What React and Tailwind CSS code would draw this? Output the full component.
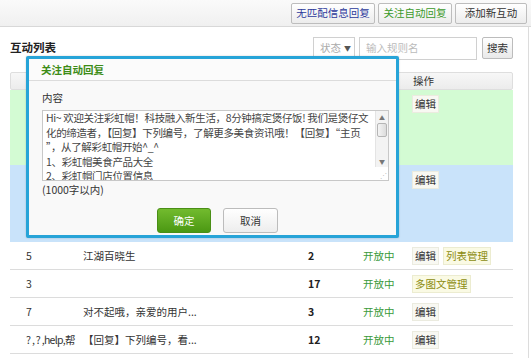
import React from "react";

const rows = [
  { id: "5", name: "江湖百晓生", count: "2", actions: ["edit", "list"] },
  { id: "3", name: "", count: "17", actions: ["multi"] },
  { id: "7", name: "对不起哦，亲爱的用户...", count: "3", actions: ["edit"] },
  { id: "? , ? ,help,帮", name: "【回复】下列编号，看...", count: "12", actions: ["edit"] },
];

const EditBtn = () => (
  <span className="inline-flex items-center h-[18px] px-[2px] bg-[#f8f8f2] border border-[#ebebdf] text-[#333]">编辑</span>
);

const OliveBtn = ({ label }) => (
  <span className="inline-flex items-center h-[18px] px-[2px] bg-[#fafae4] border border-[#ececd0] text-[#8c8c10]">{label}</span>
);

const TopBtn = ({ label, color, w }) => (
  <button className={`h-[21px] ${w} flex items-center justify-center border border-[#bdbdbd] rounded-[2px] bg-gradient-to-b from-white to-[#ececec] ${color}`}>
    {label}
  </button>
);

const content = [
  "Hi~ 欢迎关注彩虹帽！科技融入新生活，8分钟搞定煲仔饭! 我们是煲仔文",
  "化的缔造者，【回复】下列编号，了解更多美食资讯哦！【回复】“主页",
  "”，从了解彩虹帽开始^_^",
  "1、彩虹帽美食产品大全",
  "2、彩虹帽门店位置信息",
];

const Dialog = () => (
  <div className="absolute left-[26px] top-[56px] w-[373px] h-[182px] border-[3px] border-[#27a4d8] rounded-[2px] bg-[#f9f9f9] flex flex-col shadow-[0_0_2px_rgba(0,0,0,0.2)]">
    <div className="h-[22px] shrink-0 flex items-center pl-[12px] border-b border-[#dcdcdc] bg-[#fbfbfb] text-[#3c8c16] font-semibold">
      关注自动回复
    </div>
    <div className="flex flex-col pl-[13px] pr-[7px] pt-[9px]">
      <div className="leading-[15px] text-[#333]">内容</div>
      <div className="mt-[5px] h-[71px] flex border border-[#c8c8c8] bg-white overflow-hidden">
        <div className="flex-1 min-w-0 pl-[3px] leading-[14.5px] tracking-[-0.35px] text-[#444] overflow-hidden">
          {content.map((l, i) => (
            <div key={i} className="whitespace-nowrap">{l}</div>
          ))}
        </div>
        <div className="w-[13px] shrink-0 flex flex-col">
          <div className="flex-1 flex flex-col bg-[#f3f3f3] border-l border-[#e4e4e4]">
            <div className="h-[12px] flex items-center justify-center text-[6px] text-[#777]">▲</div>
            <div className="mx-[1px] h-[14px] border border-[#b5b5b5] rounded-[2px] bg-gradient-to-r from-[#f4f4f4] to-[#dcdcdc]" />
            <div className="flex-1" />
            <div className="h-[12px] flex items-center justify-center text-[6px] text-[#777]">▼</div>
          </div>
          <div className="h-[13px] bg-white flex items-end justify-end pr-[1px] pb-[1px] text-[7px] leading-[7px] text-[#bbb]">⋰</div>
        </div>
      </div>
      <div className="leading-[15px] text-[#333] mt-[1px]">(1000字以内)</div>
      <div className="flex gap-[12px] mt-[11px] ml-[115px]">
        <button className="w-[54px] h-[25px] rounded-[3px] border border-[#4a8f16] bg-gradient-to-b from-[#72bb2e] to-[#4b9812] text-white">确定</button>
        <button className="w-[55px] h-[25px] rounded-[3px] border border-[#bcbcbc] bg-gradient-to-b from-white to-[#ededed] text-[#333]">取消</button>
      </div>
    </div>
  </div>
);

export default function App() {
  return (
    <div className="relative w-[531px] h-[358px] overflow-hidden bg-white text-[10.5px] text-[#333] font-['Noto_Sans_CJK_SC','Liberation_Sans',sans-serif]">
      <div className="h-[27px] flex items-center justify-end gap-[3px] pr-[4px] border-b border-[#d8d8d8] bg-gradient-to-b from-[#fafafa] to-[#f0f0f0]">
        <TopBtn label="无匹配信息回复" color="text-[#2d3a9c]" w="w-[84px]" />
        <TopBtn label="关注自动回复" color="text-[#3b9a2a]" w="w-[74px]" />
        <TopBtn label="添加新互动" color="text-[#333]" w="w-[72px]" />
      </div>
      <div className="absolute right-[2px] top-[27px] bottom-0 w-px bg-[#dcdcdc]" />

      <div className="flex items-center h-[40px] pl-[10px] pr-[18px] pt-[2px]">
        <div className="text-[11.5px] font-semibold text-[#222]">互动列表</div>
        <div className="flex-1" />
        <div className="w-[42px] h-[23px] border border-[#d0d0d0] flex items-center pl-[6px] text-[#aaa]">状态 <span className="ml-[3px] text-[7px] text-[#555]">▼</span></div>
        <div className="ml-[4px] w-[118px] h-[23px] border border-[#d0d0d0] flex items-center pl-[6px] text-[#bbb]">输入规则名</div>
        <button className="ml-[5px] w-[31px] h-[22px] border border-[#bcbcbc] rounded-[2px] bg-gradient-to-b from-white to-[#e9e9e9] text-[#333]">搜索</button>
      </div>

      <div className="ml-[10px] w-[503px] mt-[5px]">
        <div className="h-[18px] grid grid-cols-[72px_226px_55px_49px_1fr] items-center border border-[#dedede] rounded-[2px] bg-gradient-to-b from-[#f7f7f7] to-[#ececec]">
          <div /><div /><div /><div />
          <div>操作</div>
        </div>
        <div className="h-[75px] grid grid-cols-[72px_226px_55px_49px_1fr] bg-[#d3fbd3] pt-[5px]">
          <div /><div /><div /><div />
          <div><EditBtn /></div>
        </div>
        <div className="h-[77px] grid grid-cols-[72px_226px_55px_49px_1fr] bg-[#c9e3fa] pt-[6px]">
          <div /><div /><div /><div />
          <div><EditBtn /></div>
        </div>
        {rows.map((r) => (
          <div key={r.id} className="h-[28px] grid grid-cols-[72px_226px_55px_49px_1fr] items-center border-b border-[#dcdcdc]">
            <div className="pl-[16px] whitespace-nowrap tracking-[-0.7px]">{r.id}</div>
            <div className="whitespace-nowrap pl-[1px]">{r.name}</div>
            <div className="font-bold text-[#222]">{r.count}</div>
            <div className="text-[#3a9a3a]">开放中</div>
            <div className="flex gap-[4px]">
              {r.actions.map((a) =>
                a === "edit" ? <EditBtn key={a} /> : <OliveBtn key={a} label={a === "list" ? "列表管理" : "多图文管理"} />
              )}
            </div>
          </div>
        ))}
      </div>

      <Dialog />
    </div>
  );
}
